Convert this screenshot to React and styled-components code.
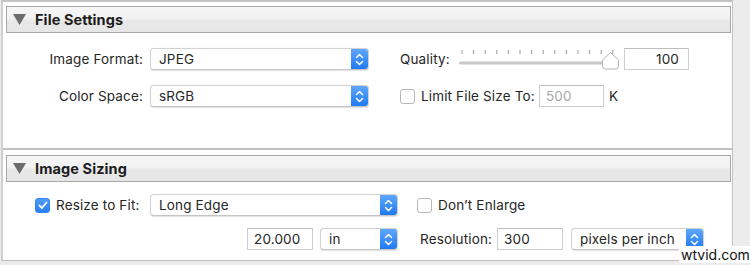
import React from "react";
import styled, { createGlobalStyle } from "styled-components";

const GlobalStyle = createGlobalStyle`
  html, body {
    margin: 0;
    padding: 0;
    background: #ececec;
    font-family: Inter, "Liberation Sans", sans-serif;
    font-size: 13.5px;
    letter-spacing: 0.15px;
    color: #262626;
  }
`;

const Page = styled.div`
  position: relative;
  display: flex;
  width: 750px;
  height: 265px;
  overflow: hidden;
`;

const Panel = styled.div`
  box-sizing: border-box;
  width: 732px;
  height: 261px;
  margin-left: 1px;
  background: #fff;
  border-top: 2px solid #c4c4c4;
  border-left: 2px solid #cfcfcf;
  border-right: 1px solid #c2c2c2;
  border-bottom: 1px solid #bdbdbd;
  display: flex;
  flex-direction: column;
`;

const Section = styled.section`
  padding: ${(p) => p.$top}px 1px 0 3px;
  border-bottom: ${(p) => (p.$last ? "none" : "2px solid #bfbfbf")};
  flex: ${(p) => (p.$last ? 1 : "none")};
  height: ${(p) => (p.$h ? `${p.$h}px` : "auto")};
  box-sizing: border-box;
`;

const Header = styled.div`
  box-sizing: border-box;
  height: 27px;
  display: flex;
  align-items: center;
  gap: 9px;
  padding-left: 6px;
  border: 1px solid #a8a8a8;
  background: linear-gradient(#f6f6f6 0%, #f2f2f2 45%, #e8e8e8 55%, #e6e6e6 100%);
  font-weight: 700;
  font-size: 14.5px;
  letter-spacing: 0.1px;
  color: #1c1c1c;
`;

const Body = styled.div`
  display: flex;
  flex-direction: column;
  gap: ${(p) => p.$gap}px;
  padding-top: ${(p) => p.$top}px;
`;

const Row = styled.div`
  display: flex;
  align-items: center;
  height: 22px;
  padding-left: ${(p) => p.$indent || 0}px;
`;

const Label = styled.span`
  width: ${(p) => p.$w}px;
  flex: none;
  text-align: ${(p) => (p.$right ? "right" : "left")};
  margin-left: ${(p) => p.$ml || 0}px;
  margin-right: ${(p) => p.$mr || 0}px;
  white-space: nowrap;
`;

const SelectBox = styled.div`
  box-sizing: border-box;
  width: ${(p) => p.$w}px;
  height: 22px;
  flex: none;
  margin-left: ${(p) => p.$ml || 0}px;
  display: flex;
  align-items: center;
  border: 1px solid #d2d2d2;
  border-bottom-color: #c4c4c4;
  border-radius: 4px;
  box-shadow: 0 0.5px 1px rgba(0, 0, 0, 0.12);
  background: #fff;
  overflow: hidden;
`;

const SelectText = styled.span`
  flex: 1;
  padding-left: 8px;
  white-space: nowrap;
`;

const Stepper = styled.div`
  width: 17px;
  height: 100%;
  display: flex;
  align-items: center;
  justify-content: center;
  background: linear-gradient(#5fa7fc, #1f7af2);
`;

const TextField = styled.div`
  box-sizing: border-box;
  width: ${(p) => p.$w}px;
  height: 22px;
  flex: none;
  margin-left: ${(p) => p.$ml || 0}px;
  border: 1px solid #cfcfcf;
  border-top-color: #bdbdbd;
  background: #fff;
  display: flex;
  align-items: center;
  justify-content: ${(p) => (p.$right ? "flex-end" : "flex-start")};
  padding: 0 ${(p) => (p.$right ? 9 : 0)}px 0 ${(p) => (p.$right ? 0 : 6)}px;
  color: ${(p) => (p.$disabled ? "#a8a8a8" : "#262626")};
`;

const Check = styled.div`
  box-sizing: border-box;
  width: 15px;
  height: 15px;
  flex: none;
  margin-left: ${(p) => p.$ml || 0}px;
  margin-right: 6px;
  border-radius: 3px;
  border: 1px solid ${(p) => (p.$on ? "#2f86f5" : "#b8b8b8")};
  background: ${(p) => (p.$on ? "linear-gradient(#4d9bfa, #2b7ff3)" : "#fff")};
  display: flex;
  align-items: center;
  justify-content: center;
`;

const SliderWrap = styled.div`
  width: 160px;
  height: 22px;
  flex: none;
`;

const Strip = styled.div`
  flex: 1;
  background: #ececec;
`;

const Watermark = styled.div`
  position: absolute;
  left: 679px;
  top: 246px;
  padding: 0 2px;
  background: #fff;
  color: #111;
  font-size: 14px;
  letter-spacing: 0;
  line-height: 17px;
`;

const Chevrons = () => (
  <svg width="9" height="13" viewBox="0 0 9 13">
    <path d="M1.5 4.5 L4.5 1.5 L7.5 4.5 M1.5 8.5 L4.5 11.5 L7.5 8.5" fill="none" stroke="#fff" strokeWidth="1.5" strokeLinecap="round" strokeLinejoin="round" />
  </svg>
);

const Triangle = () => (
  <svg width="13" height="11" viewBox="0 0 13 11">
    <path d="M0 0 H13 L6.5 11 Z" fill="#6d6d6d" />
  </svg>
);

const Tick = () => (
  <svg width="10" height="9" viewBox="0 0 10 9">
    <path d="M1.5 4.5 L4 7 L8.5 1.5" fill="none" stroke="#fff" strokeWidth="1.8" strokeLinecap="round" strokeLinejoin="round" />
  </svg>
);

const Slider = () => {
  const ticks = Array.from({ length: 14 }, (_, i) => 3 + i * 11.6);
  return (
    <SliderWrap>
      <svg width="160" height="22" viewBox="0 0 160 22">
        {ticks.map((x) => (
          <line key={x} x1={x} x2={x} y1="2" y2="6" stroke="#9a9a9a" strokeWidth="1" />
        ))}
        <rect x="0" y="13.5" width="155" height="3" rx="1.5" fill="#c9c9c9" />
        <path
          d="M143.5 12 L151.5 4.5 L159.5 12 V18 Q159.5 21 156.5 21 H146.5 Q143.5 21 143.5 18 Z"
          fill="#fff"
          stroke="#b4b4b4"
          strokeWidth="1"
        />
      </svg>
    </SliderWrap>
  );
};

const Select = ({ w, ml, children }) => (
  <SelectBox $w={w} $ml={ml}>
    <SelectText>{children}</SelectText>
    <Stepper>
      <Chevrons />
    </Stepper>
  </SelectBox>
);

export default function App() {
  return (
    <>
      <GlobalStyle />
      <Page>
        <Panel>
          <Section $top={4} $h={148}>
            <Header>
              <Triangle />
              File Settings
            </Header>
            <Body $top={15} $gap={15}>
              <Row>
                <Label $w={137} $right $mr={7}>Image Format:</Label>
                <Select w={219}>JPEG</Select>
                <Label $w={59} $ml={31}>Quality:</Label>
                <Slider />
                <TextField $w={65} $ml={5} $right>100</TextField>
              </Row>
              <Row>
                <Label $w={137} $right $mr={7}>Color Space:</Label>
                <Select w={219}>sRGB</Select>
                <Check $ml={31} />
                <Label $w={118}>Limit File Size To:</Label>
                <TextField $w={65} $disabled>500</TextField>
                <Label $w={20} $ml={5}>K</Label>
              </Row>
            </Body>
          </Section>
          <Section $top={5} $last>
            <Header>
              <Triangle />
              Image Sizing
            </Header>
            <Body $top={12} $gap={12}>
              <Row $indent={29}>
                <Check $on>
                  <Tick />
                </Check>
                <Label $w={94}>Resize to Fit:</Label>
                <Select w={248}>Long Edge</Select>
                <Check $ml={19} />
                <Label $w={120}>Don’t Enlarge</Label>
              </Row>
              <Row $indent={241}>
                <TextField $w={66}>20.000</TextField>
                <Select w={78} ml={7}>in</Select>
                <Label $w={77} $ml={22}>Resolution:</Label>
                <TextField $w={66}>300</TextField>
                <Select w={133} ml={8}>pixels per inch</Select>
              </Row>
            </Body>
          </Section>
        </Panel>
        <Strip />
        <Watermark>wtvid.com</Watermark>
      </Page>
    </>
  );
}
